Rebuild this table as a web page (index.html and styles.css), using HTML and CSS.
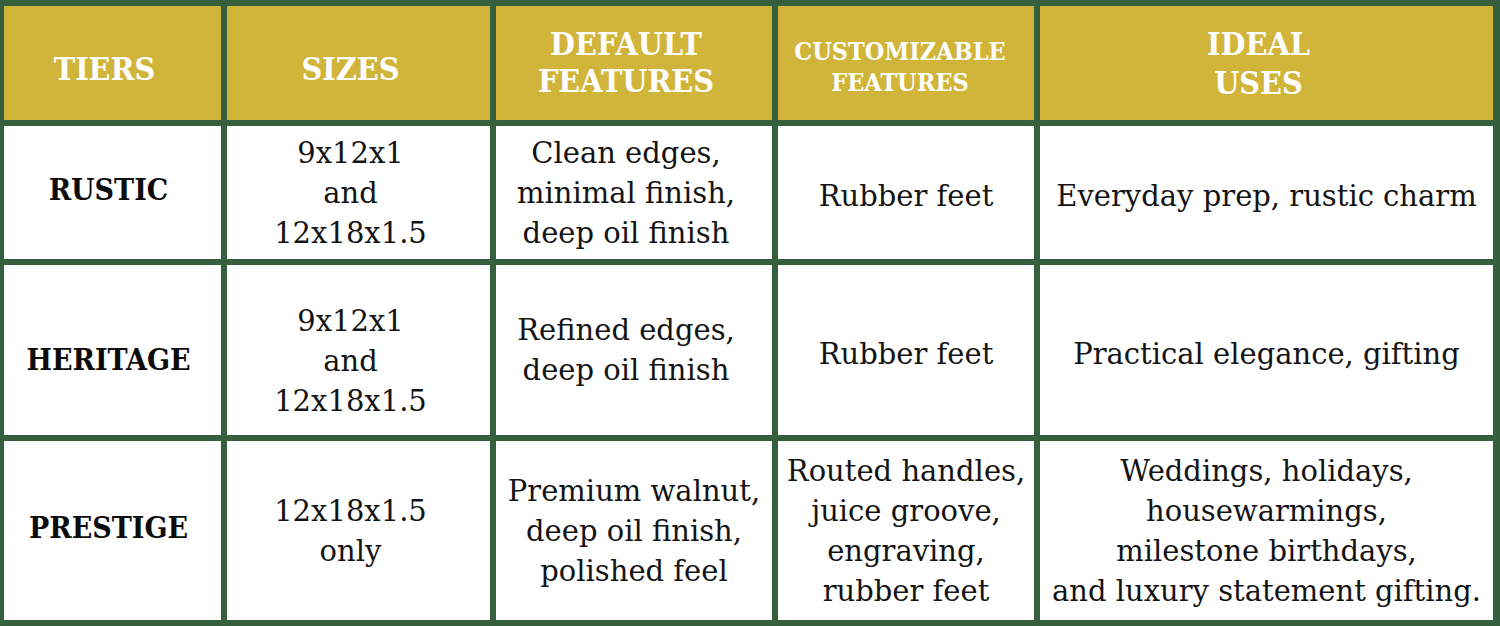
FILE: index.html
```html
<!DOCTYPE html>
<html lang="en">
<head>
<meta charset="utf-8">
<title>Tiers</title>
<link rel="stylesheet" href="styles.css">
</head>
<body>
<div class="grid">
  <div class="cell head c1">TIERS</div>
  <div class="cell head c2">SIZES</div>
  <div class="cell head c3 two">DEFAULT<br>FEATURES</div>
  <div class="cell head c4 small">CUSTOMIZABLE<br>FEATURES</div>
  <div class="cell head c5 tall">IDEAL<br>USES</div>

  <div class="cell tier c1 up">RUSTIC</div>
  <div class="cell c2">9x12x1<br>and<br>12x18x1.5</div>
  <div class="cell c3">Clean edges,<br>minimal finish,<br>deep oil finish</div>
  <div class="cell c4 down">Rubber feet</div>
  <div class="cell c5 down">Everyday prep, rustic charm</div>

  <div class="cell tier c1 low">HERITAGE</div>
  <div class="cell c2 lower">9x12x1<br>and<br>12x18x1.5</div>
  <div class="cell c3">Refined edges,<br>deep oil finish</div>
  <div class="cell c4 down2">Rubber feet</div>
  <div class="cell c5 down2">Practical elegance, gifting</div>

  <div class="cell tier c1 up">PRESTIGE</div>
  <div class="cell c2">12x18x1.5<br>only</div>
  <div class="cell c3 nopad">Premium walnut,<br>deep oil finish,<br>polished feel</div>
  <div class="cell c4">Routed handles,<br>juice groove,<br>engraving,<br>rubber feet</div>
  <div class="cell c5">Weddings, holidays,<br>housewarmings,<br>milestone birthdays,<br>and luxury statement gifting.</div>
</div>
</body>
</html>
```
FILE: styles.css
```css
html, body {
  margin: 0;
  padding: 0;
  background: #ffffff;
}
.grid {
  width: 1500px;
  height: 626px;
  box-sizing: border-box;
  background: #36603d;
  display: grid;
  grid-template-columns: 217px 263px 276px 256px 453px;
  grid-template-rows: 114px 133px 170px 179px;
  gap: 6px;
  padding: 6px 7px 6px 4px;
}
.cell {
  background: #ffffff;
  display: flex;
  align-items: center;
  justify-content: center;
  text-align: center;
  font-family: "DejaVu Serif", "Liberation Serif", serif;
  font-size: 29px;
  line-height: 40px;
  color: #141414;
  white-space: nowrap;
}
.head {
  background: #d1b53b;
  color: #ffffff;
  font-family: "DejaVu Serif Condensed", "DejaVu Serif", serif;
  font-weight: bold;
  font-size: 32px;
  line-height: 37px;
  padding-right: 16px;
  padding-top: 12px;
}
.head.two {
  padding-top: 0;
}
.head.small {
  font-size: 25px;
  line-height: 31px;
  padding-right: 12px;
  padding-top: 8px;
}
.head.tall {
  font-size: 32px;
  line-height: 39px;
  padding-right: 16px;
  padding-top: 2px;
}
.tier {
  font-family: "DejaVu Serif Condensed", "DejaVu Serif", serif;
  font-weight: bold;
  font-size: 30px;
  color: #0c0c0c;
  padding-right: 8px;
}
.tier.up {
  padding-bottom: 6px;
}
.tier.low {
  padding-top: 20px;
}
.c2:not(.head), .c3:not(.head) {
  padding-right: 16px;
}
.c3.nopad {
  padding-right: 0;
}
.lower {
  padding-top: 22px;
}
.down {
  padding-top: 6px;
}
.down2 {
  padding-top: 8px;
}
```
